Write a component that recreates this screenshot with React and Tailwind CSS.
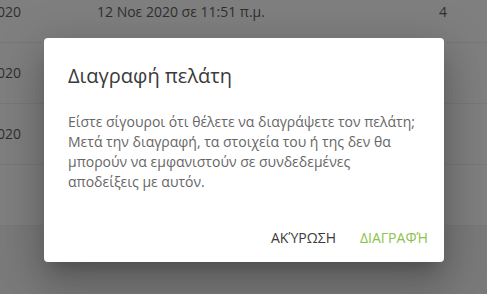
import React from 'react';

const rows = [
  { date: '12 Νοε 2020', created: '12 Νοε 2020 σε 11:51 π.μ.', count: '4' },
  { date: '12 Νοε 2020', created: '', count: '' },
  { date: '12 Νοε 2020', created: '', count: '' },
  { date: '', created: '', count: '' },
];

function App() {
  return (
    <div
      className="relative h-[294px] w-full overflow-hidden bg-[#7f7f7f] text-sm"
      style={{ fontFamily: '"Open Sans", "Noto Sans", sans-serif' }}
    >
      {/* dimmed table behind the dialog */}
      <div className="-mt-[18px] flex flex-col">
        {rows.map((r, i) => (
          <div key={i} className="flex h-[61px] items-center border-b border-[#787878] text-[#2f2f2f]">
            <div className="flex w-[21px] shrink-0 justify-end overflow-hidden whitespace-nowrap">{r.date}</div>
            <div className="ml-[76px] w-[300px] whitespace-nowrap">{r.created}</div>
            <div className="ml-[42px]">{r.count}</div>
          </div>
        ))}
      </div>
      <div className="h-full bg-[#7a7a7a]" />

      {/* dialog */}
      <div className="absolute left-[44px] top-[38px] w-[400px] rounded bg-white shadow-[0_11px_15px_-7px_rgba(0,0,0,0.2),0_24px_38px_3px_rgba(0,0,0,0.14),0_9px_46px_8px_rgba(0,0,0,0.12)]">
        <h2 className="px-6 pb-5 pt-[22px] text-xl leading-8 text-[#3a3a3a]">Διαγραφή πελάτη</h2>
        <p className="px-6 pb-5 text-sm leading-5 text-[#666666]">
          Είστε σίγουροι ότι θέλετε να διαγράψετε τον πελάτη;
          <br />
          Μετά την διαγραφή, τα στοιχεία του ή της δεν θα
          <br />
          μπορούν να εμφανιστούν σε συνδεδεμένες
          <br />
          αποδείξεις με αυτόν.
        </p>
        <div className="flex justify-end gap-2 px-2 pb-[6px] pt-2">
          <button type="button" className="h-9 px-2 text-sm text-[#3a3a3a]">ΑΚΎΡΩΣΗ</button>
          <button type="button" className="h-9 px-2 text-sm text-[#8bc34a]">ΔΙΑΓΡΑΦΉ</button>
        </div>
      </div>
    </div>
  );
}

export default App;
